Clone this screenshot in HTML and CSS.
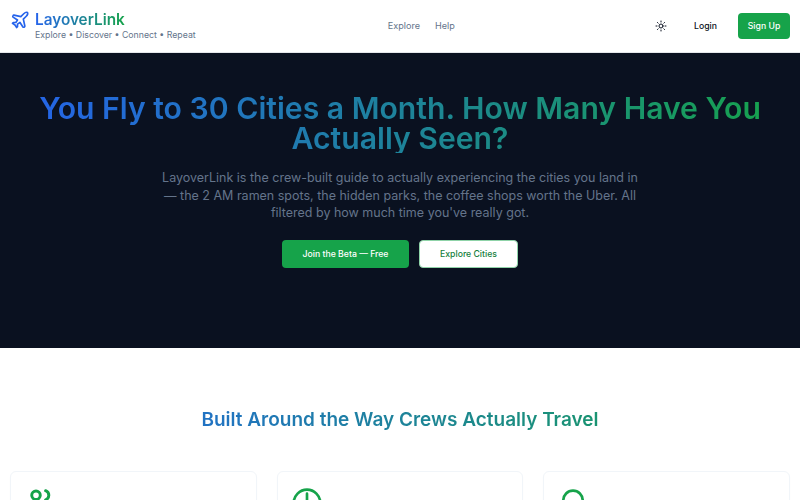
FILE: index.html
```html
<!DOCTYPE html>
<html lang="en">
<head>
<meta charset="utf-8">
<title>LayoverLink</title>
<link rel="stylesheet" href="styles.css">
</head>
<body>
<header class="nav">
  <div class="brand">
    <svg class="plane" viewBox="0 0 24 24" fill="none" stroke="currentColor" stroke-width="2" stroke-linecap="round" stroke-linejoin="round"><path d="M17.8 19.2 16 11l3.5-3.5C21 6 21.5 4 21 3c-1-.5-3 0-4.5 1.5L13 8 4.8 6.2c-.5-.1-.9.1-1.1.5l-.3.5c-.2.5-.1 1 .3 1.3L9 12l-2 3H4l-1 1 3 2 2 3 1-1v-3l3-2 3.5 5.3c.3.4.8.5 1.3.3l.5-.2c.4-.3.6-.7.5-1.2z"/></svg>
    <div class="brand-text">
      <div class="logo">LayoverLink</div>
      <div class="tagline">Explore • Discover • Connect • Repeat</div>
    </div>
  </div>
  <nav class="links"><a>Explore</a><a>Help</a></nav>
  <div class="actions">
    <span class="sun-btn"><svg class="sun" viewBox="0 0 24 24" fill="none" stroke="currentColor" stroke-width="2" stroke-linecap="round" stroke-linejoin="round"><circle cx="12" cy="12" r="4"/><path d="M12 2v2M12 20v2M4.93 4.93l1.41 1.41M17.66 17.66l1.41 1.41M2 12h2M20 12h2M6.34 17.66l-1.41 1.41M19.07 4.93l-1.41 1.41"/></svg></span>
    <a class="login">Login</a>
    <a class="signup">Sign Up</a>
  </div>
</header>
<section class="hero">
  <h1 class="gradient">You Fly to 30 Cities a Month. How Many Have You Actually Seen?</h1>
  <p>LayoverLink is the crew-built guide to actually experiencing the cities you land in — the 2 AM ramen spots, the hidden parks, the coffee shops worth the Uber. All filtered by how much time you've really got.</p>
  <div class="cta">
    <a class="btn primary">Join the Beta — Free</a>
    <a class="btn secondary">Explore Cities</a>
  </div>
</section>
<section class="features">
  <h2 class="gradient">Built Around the Way Crews Actually Travel</h2>
  <div class="grid">
    <article class="card">
      <svg class="icon" viewBox="0 0 24 24" fill="none" stroke="currentColor" stroke-width="2.2" stroke-linecap="round" stroke-linejoin="round"><circle cx="9" cy="6.2" r="3.2"/><path d="M16.2 2.8a3.6 3.6 0 0 1 0 6.8"/><path d="M16 21v-2a4 4 0 0 0-4-4H6a4 4 0 0 0-4 4v2"/><path d="M22 21v-2a4 4 0 0 0-3-3.87"/></svg>
    </article>
    <article class="card">
      <svg class="icon" viewBox="0 0 24 24" fill="none" stroke="currentColor" stroke-width="2" stroke-linecap="round" stroke-linejoin="round"><circle cx="12" cy="12" r="10"/><path d="M12 5v7l4 2"/></svg>
    </article>
    <article class="card">
      <svg class="icon" viewBox="0 0 24 24" fill="none" stroke="currentColor" stroke-width="2" stroke-linecap="round" stroke-linejoin="round"><path d="M19.3 10c0 5.5-7.3 12-7.3 12s-7.3-6.5-7.3-12a7.3 7.3 0 0 1 14.6 0Z"/></svg>
    </article>
  </div>
</section>
</body>
</html>
```
FILE: styles.css
```css
* { box-sizing: border-box; }
html, body { margin: 0; padding: 0; }
body { font-family: Inter, "Liberation Sans", sans-serif; background: #fff; color: #0a1120; height: 500px; overflow: hidden; }
.nav { height: 53px; display: flex; justify-content: space-between; align-items: center; padding: 0 10px; background: #fff; border-bottom: 1px solid #e5e7eb; }
.brand { display: flex; align-items: flex-start; gap: 5px; }
.plane { width: 20px; height: 20px; color: #2563eb; }
.brand-text { display: flex; flex-direction: column; }
.logo { font-size: 15.3px; line-height: 19px; font-weight: 600; background: linear-gradient(90deg, #2563eb, #16a34a); -webkit-background-clip: text; background-clip: text; color: transparent; width: fit-content; }
.tagline { font-size: 8.75px; line-height: 13px; color: #64748b; }
.links { display: flex; gap: 15px; font-size: 9.1px; color: #64748b; padding-bottom: 1px; }
.actions { display: flex; align-items: center; }
.sun-btn { display: flex; padding: 8px; margin-right: 19px; }
.sun { width: 12px; height: 12px; color: #0a1120; }
.login { font-size: 8.7px; font-weight: 500; margin-right: 21px; }
.signup { width: 52px; height: 26px; background: #16a34a; color: #fff; border-radius: 4px; font-size: 8.7px; font-weight: 500; display: flex; align-items: center; justify-content: center; }
.hero { height: 295px; background: #0a1120; padding-top: 40px; display: flex; flex-direction: column; align-items: center; text-align: center; }
.gradient { background: linear-gradient(90deg, #2563eb, #16a34a); -webkit-background-clip: text; background-clip: text; color: transparent; }
h1 { margin: 0; width: 780px; font-size: 30.15px; line-height: 30px; font-weight: 600; }
.hero p { margin: 16px 0 0; width: 480px; font-size: 12.5px; line-height: 17.5px; color: #64748b; }
.cta { display: flex; gap: 10px; margin-top: 18.5px; }
.btn { height: 28px; border-radius: 4px; font-size: 8.7px; font-weight: 500; display: flex; align-items: center; justify-content: center; }
.primary { width: 127px; background: #16a34a; color: #fff; }
.secondary { width: 99px; background: #fff; color: #15803d; border: 1px solid #8fd3a8; }
.features { padding: 60px 10px 0; }
h2 { margin: 0; font-size: 19px; line-height: 24px; font-weight: 600; text-align: center; }
.grid { display: grid; grid-template-columns: repeat(3, 1fr); gap: 20px; margin-top: 39px; }
.card { height: 180px; border: 1px solid #f1f5f9; border-radius: 6px; padding: 15px 13px; box-shadow: 0 1px 2px rgba(0,0,0,.02); }
.icon { display: block; width: 32px; height: 32px; color: #16a34a; }
```
